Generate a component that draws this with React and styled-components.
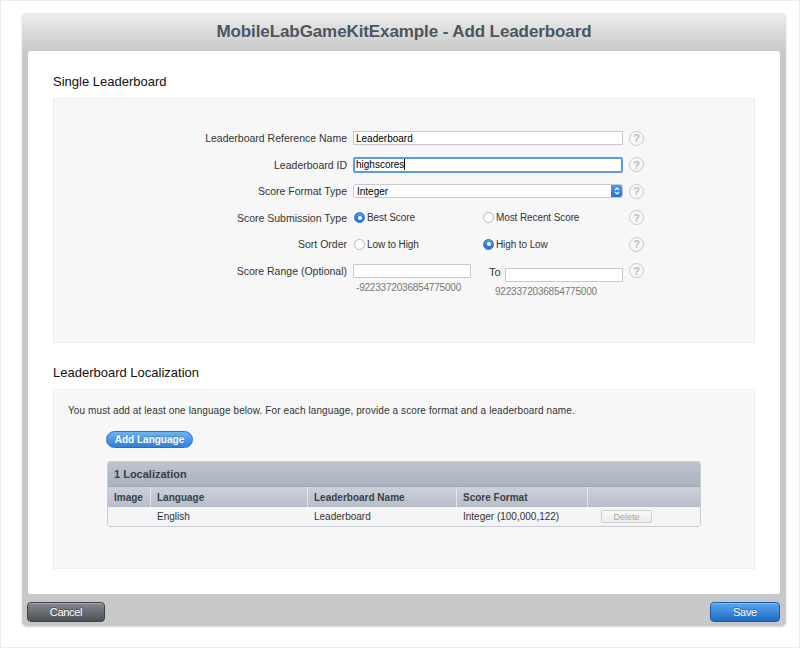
import React from 'react';
import styled, { createGlobalStyle } from 'styled-components';

const GlobalStyle = createGlobalStyle`
  html, body {
    margin: 0;
    padding: 0;
    background: #ffffff;
  }
  body {
    font-family: "Liberation Sans", Arial, sans-serif;
    color: #333;
  }
  * {
    box-sizing: border-box;
  }
`;

const Page = styled.div`
  width: 800px;
  height: 648px;
  border: 1px solid #ececec;
  padding: 12px 13px 0 21px;
`;

const Dialog = styled.div`
  width: 764px;
  height: 613px;
  border-radius: 5px;
  background: #c8c8c8;
  box-shadow: 0 1px 2px rgba(0, 0, 0, 0.18);
  display: flex;
  flex-direction: column;
  overflow: hidden;
`;

const Header = styled.div`
  height: 38px;
  flex: none;
  background: linear-gradient(#ededed, #c9c9c9);
  display: flex;
  align-items: center;
  justify-content: center;
`;

const Title = styled.h1`
  margin: 0;
  font-family: "Liberation Sans", Arial, sans-serif;
  font-size: 17px;
  font-weight: bold;
  color: #4b5661;
  letter-spacing: -0.1px;
`;

const Content = styled.div`
  margin: 0 6px;
  flex: 1;
  background: #ffffff;
  border-radius: 2px;
  padding: 22px 25px 0 25px;
`;

const SectionTitle = styled.h2`
  margin: 0 0 8px;
  font-size: 13px;
  line-height: 17px;
  font-weight: normal;
  color: #111;
`;

const Box = styled.div`
  background: #f7f7f7;
  border: 1px solid #ededed;
  height: ${p => p.h}px;
  margin-bottom: ${p => p.mb || 0}px;
  padding: ${p => p.pad};
`;

const Form = styled.div`
  display: grid;
  grid-template-columns: 293px 270px 20px;
  column-gap: 6px;
  grid-auto-rows: 26.5px;
`;

const Label = styled.div`
  font-size: 10.5px;
  color: #333;
  text-align: right;
  align-self: center;
`;

const Field = styled.div`
  display: flex;
  align-items: ${p => (p.top ? 'flex-start' : 'center')};
`;

const TextInput = styled.div`
  width: ${p => p.w || 270}px;
  height: ${p => (p.focused ? 16 : 14)}px;
  background: #fff;
  border: ${p => (p.focused ? '2px solid #5b9ae6' : '1px solid #c9c9c9')};
  border-radius: ${p => (p.focused ? 2 : 0)}px;
  font-size: 10px;
  color: #000;
  padding-left: ${p => (p.focused ? 1 : 2)}px;
  display: flex;
  align-items: center;
`;

const Caret = styled.span`
  display: inline-block;
  width: 1px;
  height: 11px;
  background: #000;
`;

const Select = styled.div`
  width: 270px;
  height: 14px;
  background: #fff;
  border: 1px solid #c9c9c9;
  border-radius: 3px;
  font-size: 10px;
  color: #000;
  padding-left: 3px;
  display: flex;
  align-items: center;
  justify-content: space-between;
  overflow: hidden;
`;

const Stepper = styled.div`
  width: 12px;
  height: 14px;
  margin-right: -1px;
  background: linear-gradient(#4d9cf0, #1e6fe0);
  border-radius: 0 3px 3px 0;
  display: flex;
  align-items: center;
  justify-content: center;
`;

const RadioGroup = styled.div`
  display: grid;
  grid-template-columns: 129px 1fr;
  align-items: center;
  width: 270px;
`;

const RadioOption = styled.label`
  display: flex;
  align-items: center;
  font-size: 10px;
  color: #333;
  gap: 2px;
  letter-spacing: -0.1px;
`;

const RadioDot = styled.span`
  width: 11px;
  height: 11px;
  border-radius: 50%;
  flex: none;
  margin-left: 1px;
  background: ${p => (p.on ? 'linear-gradient(#4f9cf2, #1f6fe0)' : '#fff')};
  border: 1px solid ${p => (p.on ? '#2a6fd1' : '#b9b9b9')};
  display: flex;
  align-items: center;
  justify-content: center;
  &::after {
    content: '';
    width: 4px;
    height: 4px;
    border-radius: 50%;
    background: #fff;
    display: ${p => (p.on ? 'block' : 'none')};
  }
`;

const RangeRow = styled.div`
  display: flex;
  width: 270px;
  align-items: flex-start;
`;

const RangeCol = styled.div`
  display: flex;
  flex-direction: column;
  margin-top: ${p => p.mt || 0}px;
`;

const RangeHint = styled.div`
  font-size: 10px;
  color: #777;
  margin: 4px 0 0 ${p => p.ml || 0}px;
  letter-spacing: -0.2px;
`;

const ToLabel = styled.div`
  font-size: 11px;
  color: #333;
  width: 34px;
  padding-left: 18px;
  margin-top: ${p => p.mt || 0}px;
  line-height: 14px;
`;

const Help = styled.div`
  width: 15px;
  height: 15px;
  border-radius: 50%;
  border: 1.5px solid #c9c9c9;
  color: #bdbdbd;
  font-size: 11px;
  font-weight: bold;
  display: flex;
  align-items: center;
  justify-content: center;
  align-self: center;
`;

const Note = styled.p`
  margin: 0 0 15px;
  font-size: 10px;
  color: #333;
  letter-spacing: 0.1px;
`;

const PillButton = styled.button`
  display: block;
  margin-left: 38px;
  width: 87px;
  height: 17px;
  border-radius: 9px;
  border: 1px solid #2c6fbf;
  background: linear-gradient(#6fb3f1, #2f80d8);
  color: #fff;
  font-family: "Liberation Sans", Arial, sans-serif;
  font-size: 10px;
  font-weight: bold;
  text-shadow: 0 -1px 0 rgba(0, 0, 0, 0.25);
  padding: 0;
  margin-bottom: 13px;
`;

const Table = styled.div`
  margin-left: 39px;
  width: 594px;
  border: 1px solid #c7ccd4;
  border-radius: 3px;
  overflow: hidden;
`;

const TableTitle = styled.div`
  height: 25px;
  background: linear-gradient(#bcc3ce, #aab2bf);
  font-size: 11px;
  font-weight: bold;
  color: #3a3f47;
  display: flex;
  align-items: center;
  padding-left: 6px;
  border-bottom: 1px solid #9ea7b5;
`;

const Row = styled.div`
  display: grid;
  grid-template-columns: 43px 157px 149px 131px 1fr;
  height: ${p => (p.head ? 20 : 19)}px;
  background: ${p => (p.head ? 'linear-gradient(#ccd2db, #b6bec9)' : '#f4f4f4')};
`;

const Cell = styled.div`
  font-size: 10px;
  font-weight: ${p => (p.head ? 'bold' : 'normal')};
  color: ${p => (p.head ? '#3a3f47' : '#333')};
  display: flex;
  align-items: center;
  padding-left: 6px;
  border-right: ${p => (p.head && !p.last ? '1px solid #e3e6ea' : 'none')};
`;

const SmallButton = styled.button`
  width: 51px;
  height: 13px;
  margin-left: 7px;
  border: 1px solid #cfcfcf;
  border-radius: 2px;
  background: linear-gradient(#fafafa, #ececec);
  color: #a5a5a5;
  font-family: "Liberation Sans", Arial, sans-serif;
  font-size: 9px;
  padding: 0;
`;

const Footer = styled.div`
  height: 32px;
  flex: none;
  display: flex;
  align-items: center;
  justify-content: space-between;
  padding: 3px 6px 0 5px;
`;

const FooterButton = styled.button`
  width: ${p => p.w}px;
  height: 20px;
  border-radius: 4px;
  border: 1px solid ${p => (p.primary ? '#1b5aa6' : '#3d4147')};
  background: ${p =>
    p.primary
      ? 'linear-gradient(#5aa6ee, #1f6bc6)'
      : 'linear-gradient(#868a90, #4c5057)'};
  color: #fff;
  font-family: "Liberation Sans", Arial, sans-serif;
  font-size: 11px;
  letter-spacing: -0.3px;
  text-shadow: 0 -1px 0 rgba(0, 0, 0, 0.35);
  box-shadow: inset 0 1px 0 rgba(255, 255, 255, 0.25);
  padding: 0;
`;

const HelpIcon = () => <Help>?</Help>;

const StepperIcon = () => (
  <svg width="8" height="10" viewBox="0 0 8 10">
    <path d="M2 4 L4 2 L6 4 M2 6 L4 8 L6 6" fill="none" stroke="#fff" strokeWidth="1.2" />
  </svg>
);

const localizations = [
  { image: '', language: 'English', name: 'Leaderboard', format: 'Integer (100,000,122)' },
];

export default function App() {
  return (
    <>
      <GlobalStyle />
      <Page>
        <Dialog>
          <Header>
            <Title>MobileLabGameKitExample - Add Leaderboard</Title>
          </Header>
          <Content>
            <SectionTitle>Single Leaderboard</SectionTitle>
            <Box h={245} mb={21} pad="26px 0 0 0">
              <Form>
                <Label>Leaderboard Reference Name</Label>
                <Field>
                  <TextInput>Leaderboard</TextInput>
                </Field>
                <HelpIcon />

                <Label>Leaderboard ID</Label>
                <Field>
                  <TextInput focused>
                    highscores<Caret />
                  </TextInput>
                </Field>
                <HelpIcon />

                <Label>Score Format Type</Label>
                <Field>
                  <Select>
                    <span>Integer</span>
                    <Stepper>
                      <StepperIcon />
                    </Stepper>
                  </Select>
                </Field>
                <HelpIcon />

                <Label>Score Submission Type</Label>
                <Field>
                  <RadioGroup>
                    <RadioOption><RadioDot on />Best Score</RadioOption>
                    <RadioOption><RadioDot />Most Recent Score</RadioOption>
                  </RadioGroup>
                </Field>
                <HelpIcon />

                <Label>Sort Order</Label>
                <Field>
                  <RadioGroup>
                    <RadioOption><RadioDot />Low to High</RadioOption>
                    <RadioOption><RadioDot on />High to Low</RadioOption>
                  </RadioGroup>
                </Field>
                <HelpIcon />

                <Label>Score Range (Optional)</Label>
                <Field top>
                  <RangeRow>
                    <RangeCol mt={6}>
                      <TextInput w={118} />
                      <RangeHint ml={3}>-9223372036854775000</RangeHint>
                    </RangeCol>
                    <ToLabel mt={7}>To</ToLabel>
                    <RangeCol mt={10}>
                      <TextInput w={118} />
                      <RangeHint ml={-10}>9223372036854775000</RangeHint>
                    </RangeCol>
                  </RangeRow>
                </Field>
                <HelpIcon />
              </Form>
            </Box>

            <SectionTitle>Leaderboard Localization</SectionTitle>
            <Box h={180} pad="15px 0 0 14px">
              <Note>
                You must add at least one language below. For each language, provide a score format and a leaderboard name.
              </Note>
              <PillButton>Add Language</PillButton>
              <Table>
                <TableTitle>{localizations.length} Localization</TableTitle>
                <Row head>
                  <Cell head>Image</Cell>
                  <Cell head>Language</Cell>
                  <Cell head>Leaderboard Name</Cell>
                  <Cell head>Score Format</Cell>
                  <Cell head last />
                </Row>
                {localizations.map(l => (
                  <Row key={l.language}>
                    <Cell>{l.image}</Cell>
                    <Cell>{l.language}</Cell>
                    <Cell>{l.name}</Cell>
                    <Cell>{l.format}</Cell>
                    <Cell>
                      <SmallButton>Delete</SmallButton>
                    </Cell>
                  </Row>
                ))}
              </Table>
            </Box>
          </Content>
          <Footer>
            <FooterButton w={78}>Cancel</FooterButton>
            <FooterButton w={70} primary>Save</FooterButton>
          </Footer>
        </Dialog>
      </Page>
    </>
  );
}
